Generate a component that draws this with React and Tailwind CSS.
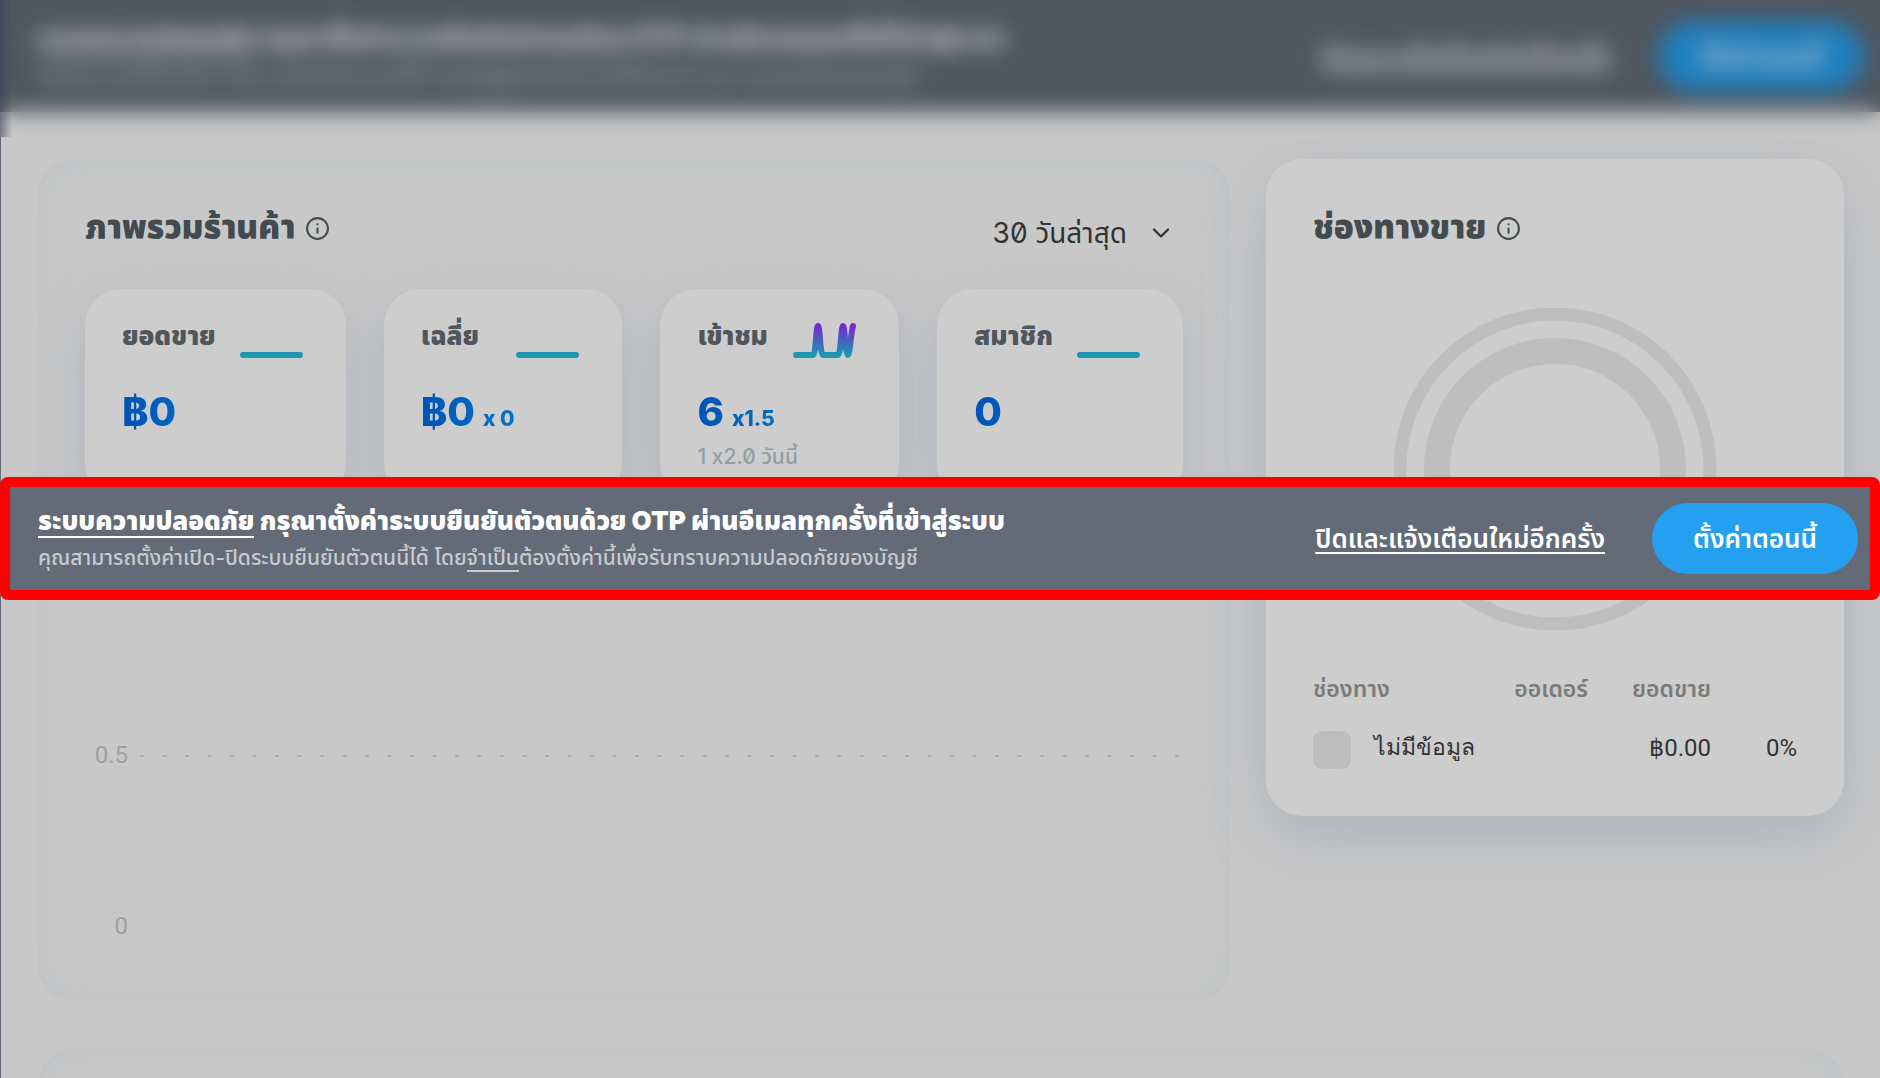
import { useId } from "react";
import { ChevronDown, Info } from "lucide-react";

const stats = [
  { label: "ยอดขาย", value: "฿0" },
  { label: "เฉลี่ย", value: "฿0", times: "x 0" },
  { label: "เข้าชม", value: "6", times: "x1.5", today: "1 x2.0 วันนี้", spikes: true },
  { label: "สมาชิก", value: "0" },
];

function Sparkline({ spikes }) {
  const id = useId();
  return (
    <svg width="66" height="42" viewBox="0 0 66 42" fill="none" className="shrink-0">
      <defs>
        <linearGradient id={id} gradientUnits="userSpaceOnUse" x1="0" y1="4" x2="0" y2="36">
          <stop offset="0" stopColor="#7a22d2" />
          <stop offset="1" stopColor="#1a9bb0" />
        </linearGradient>
      </defs>
      <path
        d={
          spikes
            ? "M3 35H20C23 35 23 6 25 6S27 35 30 35H45C48 35 48 6 50 6S52 35 55 35C57 35 58 12 60 6"
            : "M3 35H60"
        }
        stroke={`url(#${id})`}
        strokeWidth="6"
        strokeLinecap="round"
        strokeLinejoin="round"
      />
    </svg>
  );
}

function StatCard({ label, value, times, today, spikes }) {
  return (
    <div className="h-[211px] rounded-[36px] bg-[#cdcdcd] pl-[37px] pr-10 pt-[31px] shadow-[0_16px_48px_rgba(130,145,170,0.35)]">
      <div className="flex justify-between">
        <h3 className="text-[26px] leading-[32px] font-black text-[#4f565c] whitespace-nowrap">{label}</h3>
        <Sparkline spikes={spikes} />
      </div>
      <p className="mt-[22px] flex items-baseline gap-2 leading-[56px] font-extrabold bg-gradient-to-r from-[#0052b8] to-[#0090cc] bg-clip-text text-transparent">
        <span className="text-[40px]">{value}</span>
        {times && <span className="text-[21px]">{times}</span>}
      </p>
      {today && <p className="-mt-1 text-[21px] leading-[28px] font-medium text-[#959da3] [font-feature-settings:'calt'_0,'zero'_1]">{today}</p>}
    </div>
  );
}

function SecurityBar() {
  return (
    <div className="flex h-full items-center justify-between text-white whitespace-nowrap">
      <div>
        <p className="text-[26px] leading-[38px] font-black">
          <span className="border-b-2 border-white">ระบบความปลอดภัย</span> กรุณาตั้งค่าระบบยืนยันตัวตนด้วย OTP ผ่านอีเมลทุกครั้งที่เข้าสู่ระบบ
        </p>
        <p className="text-[21px] leading-[36px] font-medium text-[#c6cacf]">
          คุณสามารถตั้งค่าเปิด-ปิดระบบยืนยันตัวตนนี้ได้ โดย<span className="border-b-2 border-[#c6cacf]">จำเป็น</span>ต้องตั้งค่านี้เพื่อรับทราบความปลอดภัยของบัญชี
        </p>
      </div>
      <div className="flex items-center gap-[47px]">
        <a href="#later" className="text-[26px] font-semibold underline decoration-2 underline-offset-4">
          ปิดและแจ้งเตือนใหม่อีกครั้ง
        </a>
        <button className="h-[71px] w-[206px] rounded-full bg-[#259fef] text-[26px] font-semibold">ตั้งค่าตอนนี้</button>
      </div>
    </div>
  );
}

function Title({ children }) {
  return (
    <h2 className="flex h-10 items-center gap-[10px] text-[33px] font-black text-[#434b4f]">
      {children}
      <Info size={25} strokeWidth={2} />
    </h2>
  );
}

function Overview() {
  return (
    <section className="flex-1 h-[842px] rounded-[36px] px-[47px] pt-[49px] shadow-[inset_0_0_32px_rgba(170,185,200,0.3)]">
      <div className="flex h-12 items-start justify-between">
        <Title>ภาพรวมร้านค้า</Title>
        <button className="mr-2 flex h-[50px] items-center gap-5 text-[28px] text-[#333] [font-feature-settings:'zero'_1]">
          30 วันล่าสุด
          <ChevronDown size={28} strokeWidth={2} />
        </button>
      </div>
      <div className="mt-[33px] grid grid-cols-[261fr_239fr_239fr_246fr] gap-[38px]">
        {stats.map((s) => (
          <StatCard key={s.label} {...s} />
        ))}
      </div>
      <div className="mt-[239px] flex items-center gap-3 font-[Roboto] text-2xl text-[#a0a0a0]">
        <span className="w-[43px] text-right">0.5</span>
        <svg className="h-1 flex-1">
          <line x1="0" y1="3" x2="100%" y2="3" stroke="#adadad" strokeWidth="2" strokeDasharray="4 18.500" />
        </svg>
      </div>
      <p className="mt-[139px] w-[43px] text-right font-[Roboto] text-2xl text-[#a0a0a0]">0</p>
    </section>
  );
}

function Channels() {
  return (
    <section className="w-[578px] h-[657px] rounded-[36px] bg-[#cdcdcd] px-[47px] pt-[49px] shadow-[0_20px_60px_rgba(130,145,170,0.4)]">
      <Title>ช่องทางขาย</Title>
      <svg width="323" height="323" viewBox="0 0 323 323" fill="none" stroke="#bebebe" className="mx-auto mt-[60px]">
        <circle cx="161" cy="161" r="155" strokeWidth="13" />
        <circle cx="161" cy="161" r="118" strokeWidth="26" />
      </svg>
      <table className="mt-[36px] w-full table-fixed text-right">
        <thead className="text-[23px] text-[#7b7b7b]">
          <tr className="h-11">
            <th className="text-left font-semibold">ช่องทาง</th>
            <th className="w-[100px] font-semibold">ออเดอร์</th>
            <th className="w-[123px] font-semibold">ยอดขาย</th>
            <th className="w-[86px]"></th>
          </tr>
        </thead>
        <tbody className="font-[Roboto] text-2xl text-[#333]">
          <tr className="h-[78px]">
            <td className="text-left">
              <div className="flex items-center gap-[23px] whitespace-nowrap">
                <span className="size-[38px] rounded-[9px] bg-[#bebebe]" />
                <span className="pb-1 text-[23px]">ไม่มีข้อมูล</span>
              </div>
            </td>
            <td></td>
            <td className="pb-1">฿0.00</td>
            <td className="pb-1">0%</td>
          </tr>
        </tbody>
      </table>
    </section>
  );
}

function App() {
  return (
    <div className="relative h-screen overflow-hidden bg-[#c8c8c8] font-[Inter,'Noto_Sans_Thai',sans-serif]">
      <header className="relative h-[137px] bg-[#fafafa]">
        <div className="h-[112px] bg-[#636c77] pl-[38px] pr-4" aria-hidden="true" inert>
          <SecurityBar />
        </div>
        <div className="absolute inset-0 bg-black/20 backdrop-blur-[11px]" />
        {/* soft shade along the left edge */}
        <div className="absolute inset-y-0 left-0 w-3 bg-gradient-to-r from-[#3f4459]/60 to-transparent" />
      </header>

      <main className="min-h-screen border-l border-[#636a78] pl-[37px] pr-9 pt-[22px]">
        <div className="flex items-start gap-9">
          <Overview />
          <Channels />
        </div>
        <section className="mt-12 h-[300px] rounded-[36px] shadow-[inset_0_0_32px_rgba(170,185,200,0.3)]" />
      </main>

      <div className="absolute inset-x-0 top-[477px] h-[123px] rounded-lg border-[10px] border-[#ff0000] bg-[#636a78] pl-[28px] pr-[12px]">
        <SecurityBar />
      </div>
    </div>
  );
}

export default App;
